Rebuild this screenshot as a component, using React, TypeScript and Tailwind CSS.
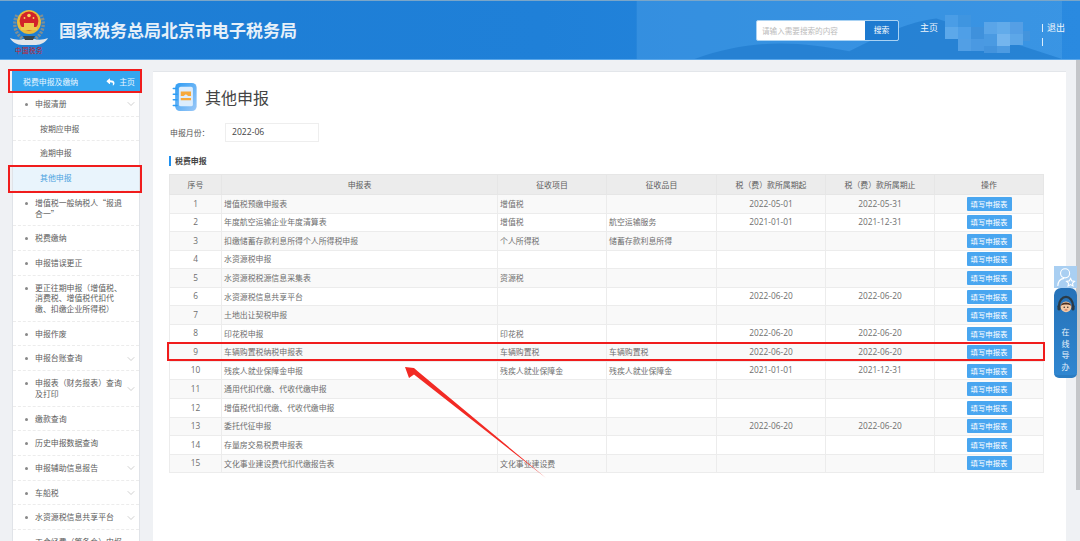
import { ChevronDown } from "lucide-react";
import { FaReply } from "react-icons/fa";

const font = "font-['Noto_Sans_CJK_SC','Microsoft_YaHei',sans-serif]";

type NavItem = { label: string; chevron?: boolean; sub?: boolean; active?: boolean };

const navItems: NavItem[] = [
  { label: "申报清册", chevron: true },
  { label: "按期应申报", sub: true },
  { label: "逾期申报", sub: true },
  { label: "其他申报", sub: true, active: true },
  { label: "增值税一般纳税人“报退合一”" },
  { label: "税费缴纳" },
  { label: "申报错误更正" },
  { label: "更正往期申报\uFF08增值税、消费税、增值税代扣代缴、扣缴企业所得税\uFF09" },
  { label: "申报作废" },
  { label: "申报台账查询", chevron: true },
  { label: "申报表\uFF08财务报表\uFF09查询及打印", chevron: true },
  { label: "缴款查询" },
  { label: "历史申报数据查询" },
  { label: "申报辅助信息报告", chevron: true },
  { label: "车船税", chevron: true },
  { label: "水资源税信息共享平台", chevron: true },
  { label: "工会经费\uFF08筹备金\uFF09申报" },
];

const rows = [
  ["1", "增值税预缴申报表", "增值税", "", "2022-05-01", "2022-05-31"],
  ["2", "年度航空运输企业年度清算表", "增值税", "航空运输服务", "2021-01-01", "2021-12-31"],
  ["3", "扣缴储蓄存款利息所得个人所得税申报", "个人所得税", "储蓄存款利息所得", "", ""],
  ["4", "水资源税申报", "", "", "", ""],
  ["5", "水资源税税源信息采集表", "资源税", "", "", ""],
  ["6", "水资源税信息共享平台", "", "", "2022-06-20", "2022-06-20"],
  ["7", "土地出让契税申报", "", "", "", ""],
  ["8", "印花税申报", "印花税", "", "2022-06-20", "2022-06-20"],
  ["9", "车辆购置税纳税申报表", "车辆购置税", "车辆购置税", "2022-06-20", "2022-06-20"],
  ["10", "残疾人就业保障金申报", "残疾人就业保障金", "残疾人就业保障金", "2021-01-01", "2021-12-31"],
  ["11", "通用代扣代缴、代收代缴申报", "", "", "", ""],
  ["12", "增值税代扣代缴、代收代缴申报", "", "", "", ""],
  ["13", "委托代征申报", "", "", "2022-06-20", "2022-06-20"],
  ["14", "存量房交易税费申报表", "", "", "", ""],
  ["15", "文化事业建设费代扣代缴报告表", "文化事业建设费", "", "", ""],
];

const headers = ["序号", "申报表", "征收项目", "征收品目", "税\uFF08费\uFF09款所属期起", "税\uFF08费\uFF09款所属期止", "操作"];

// 打码的用户名
const mosaic = [
  [945, 14, 13, 12, "#4a9de6"], [958, 14, 13, 12, "#3f95e0"], [984, 21, 13, 12, "#5aa5e8"], [997, 21, 13, 12, "#62abea"], [1010, 21, 13, 12, "#559fe5"],
  [945, 26, 13, 12, "#5ca8ea"], [958, 26, 13, 12, "#4f9fe7"], [971, 26, 13, 12, "#3f91dc"], [984, 33, 13, 12, "#4a9ae2"], [997, 33, 13, 12, "#74b5ee"],
  [1010, 33, 13, 11, "#5da7e8"], [958, 38, 13, 12, "#529fe5"], [971, 38, 13, 12, "#4a99e2"], [984, 45, 13, 7, "#4393dd"], [997, 45, 13, 7, "#4d9be2"], [1023, 30, 7, 10, "#4394dd"],
] as const;

function Emblem() {
  return (
    <svg viewBox="0 0 38 40" className="h-[40px] w-[38px] shrink-0">
      <path d="M0 31c5 2 10 2 14 1l5-1 5 1c4 1 9 1 14-1-2 4-7 7-12 7H12C7 38 2 35 0 31z" fill="#dfe5ea" />
      <path d="M7 8C3 15 4 26 13 32M31 8c4 7 3 18-6 24" fill="none" stroke="#7f8f94" strokeWidth="3.400" strokeDasharray="2.200 1.200" />
      <circle cx="19" cy="15" r="12" fill="#e9bb3c" />
      <circle cx="19" cy="14" r="9.400" fill="#d3232a" />
      <path d="M11 20h16v3H11zM14 16h10v4H14z" fill="#f0c94f" />
      <circle cx="19" cy="8.500" r="1.800" fill="#f5d65a" />
      <circle cx="14.500" cy="11" r=".9" fill="#f5d65a" />
      <circle cx="23.500" cy="11" r=".9" fill="#f5d65a" />
      <path d="M13 29h12l-2 4h-8z" fill="#39474f" />
    </svg>
  );
}

function Header() {
  return (
    <header className="relative flex h-[60px] items-center overflow-hidden border-t border-[#7ba6c8] border-b border-b-[#5aa7ea] bg-gradient-to-r from-[#1d7dd4] via-[#1f80d8] to-[#2a8ae0] pl-[10px] pr-[15px]">
      <svg viewBox="0 0 1080 60" className="absolute inset-0 h-full w-full">
        <path d="M640 0h440v60H640z" fill="#5aa8ea" opacity=".35" />
        <path d="M700 60c60-22 110-18 160-8 40-20 60-30 90-34l50 16 80 26z" fill="#1a74c9" opacity=".55" />
      </svg>
      <div className="relative flex flex-col items-center">
        <Emblem />
        <span className="mt-[-1px] text-[6.5px] leading-[8px] tracking-[0.5px] text-[#c8202a]">中国税务</span>
      </div>
      <h1 className="relative ml-[11px] text-[17px] font-bold tracking-normal text-[#e6f0f9]">国家税务总局北京市电子税务局</h1>
      <div className="relative ml-auto flex h-[21px] w-[143px] overflow-hidden rounded-[2px] border border-[#a9d2f3] bg-white">
        <span className="flex-1 pl-[5px] text-[7.6px] leading-[19px] text-[#bbb]">请输入需要搜索的内容</span>
        <span className="flex w-[33px] items-center justify-center bg-[#1d7ad0] text-[7.8px] text-white">搜索</span>
      </div>
      <span className="relative mb-[5px] ml-[21px] text-[9px] text-[#eef5fc]">主页</span>
      <svg viewBox="945 0 85 60" className="absolute top-0 left-[945px] h-[60px] w-[85px]">
        {mosaic.map(([x, y, w, h, c], i) => (
          <rect key={i} x={x} y={y} width={w} height={h} fill={c} />
        ))}
      </svg>
      <div className="relative mt-[12px] ml-[104px] flex h-[30px] flex-col items-start">
        <span className="flex items-center text-[9px] leading-[14px] text-[#eef5fc]">
          <span className="mr-[4px] h-[8px] w-px bg-[#dcedfb]" />
          退出
        </span>
        <span className="mt-[3px] h-[8px] w-px bg-[#dcedfb]" />
      </div>
    </header>
  );
}

function Sidebar() {
  return (
    <aside className="w-[128px] shrink-0">
      <div className="flex h-[21px] items-center bg-[#35a6ef] pr-[5px] pl-[11px] text-[7.9px] text-[#e9f6ff]">
        <span>税费申报及缴纳</span>
        <FaReply className="mr-[4px] ml-auto h-[8px] w-[9px] text-white" />
        <span>主页</span>
      </div>
      <ul className="border-x border-[#e0e3e8] bg-white text-[7.9px] leading-[10.7px] text-[#5c5c5c]">
        {navItems.map((item) => (
          <li
            key={item.label}
            className={`flex items-center border-b border-dashed border-[#ececec] pt-[7px] pb-[6px] ${item.active ? "bg-[#e9f4fc] text-[#4aa3e0]" : ""}`}
          >
            {item.sub ? (
              <span className="pl-[27px]">{item.label}</span>
            ) : (
              <>
                <span className="ml-[12px] mt-[4px] h-[3px] w-[3px] shrink-0 self-start rounded-full bg-[#888]" />
                <span className="ml-[7px] w-[88px]">{item.label}</span>
              </>
            )}
            {item.chevron && <ChevronDown strokeWidth={1} className="-my-[2px] ml-auto mr-[2px] h-[12px] w-[12px] text-[#a0a0a0]" />}
          </li>
        ))}
      </ul>
    </aside>
  );
}

function NotebookIcon() {
  return (
    <svg viewBox="0 0 26 30" className="h-[28px] w-[25px]">
      <defs>
        <linearGradient id="nb" x1="0" y1="0" x2="1" y2="1">
          <stop offset="0" stopColor="#2f9df4" />
          <stop offset="1" stopColor="#9cc8f7" />
        </linearGradient>
      </defs>
      <rect x="3" y="0" width="23" height="30" rx="5" fill="url(#nb)" />
      <rect x="7" y="4" width="15" height="21" rx="2" fill="#dcedfd" />
      <path d="M9 9h11v5h-3l-2.500-2-2.500 2H9zM9 16h11v2.500H9z" fill="#f6a93b" />
      <path d="M1 6h4M1 12h4M1 18h4M1 24h4" stroke="#2f9df4" strokeWidth="1.600" strokeLinecap="round" />
    </svg>
  );
}

function ReportTable() {
  return (
    <table className="w-[874px] table-fixed border-collapse text-[7.9px] text-[#6e6e6e]">
      <colgroup>
        <col className="w-[52px]" />
        <col className="w-[276px]" />
        <col className="w-[109px]" />
        <col className="w-[110px]" />
        <col className="w-[109px]" />
        <col className="w-[109px]" />
        <col className="w-[109px]" />
      </colgroup>
      <thead>
        <tr className="h-[20px] bg-[#ececec]">
          {headers.map((h) => (
            <th key={h} className="border border-[#e6e6e6] p-0 font-normal text-[#5c5c5c]">
              {h}
            </th>
          ))}
        </tr>
      </thead>
      <tbody>
        {rows.map((r, i) => (
          <tr key={r[0]} className={`h-[18.55px] ${i % 2 === 0 ? "bg-[#f9f9f9]" : "bg-white"}`}>
            <td className="border border-[#ececec] p-0 text-center font-['Open_Sans',sans-serif] text-[8.3px]">{r[0]}</td>
            <td className="border border-[#ececec] px-[2px] py-0">{r[1]}</td>
            <td className="border border-[#ececec] px-[2px] py-0">{r[2]}</td>
            <td className="border border-[#ececec] px-[2px] py-0">{r[3]}</td>
            <td className="border border-[#ececec] p-0 text-center font-['Open_Sans',sans-serif] text-[8.3px]">{r[4]}</td>
            <td className="border border-[#ececec] p-0 text-center font-['Open_Sans',sans-serif] text-[8.3px]">{r[5]}</td>
            <td className="border border-[#ececec] p-0 text-center">
              <button className="mx-auto block h-[14px] w-[45px] rounded-[1px] bg-[#49a6f0] text-[7.4px] leading-[14px] text-white">填写申报表</button>
            </td>
          </tr>
        ))}
      </tbody>
    </table>
  );
}

function Guide() {
  return (
    <div className="absolute top-[266px] left-[1054px] w-[23px]">
      <div className="flex h-[22px] items-center justify-center bg-[#a9cff2]">
        <svg viewBox="0 0 22 22" className="h-[20px] w-[20px]" fill="none" stroke="#fff" strokeWidth="1.200">
          <circle cx="10" cy="7" r="5" />
          <path d="M2 21c0-5 3-8 7-8.500" />
          <path d="M16 12.500l1.400 2.800 3 .4-2.200 2.100.5 3-2.700-1.400-2.700 1.400.5-3-2.200-2.100 3-.4z" />
        </svg>
      </div>
      <div className="flex h-[90px] flex-col items-center rounded-b-[5px] rounded-t-[7px] border-b-[3px] border-[#2a7cc2] bg-gradient-to-b from-[#2672b8] to-[#2f86d0] pt-[7px]">
        <svg viewBox="0 0 20 20" className="h-[20px] w-[18px]">
          <path d="M2 12C2 5 6 1 10 1s8 4 8 11" fill="none" stroke="#2b3a46" strokeWidth="2.400" />
          <rect x="0.500" y="10" width="3.500" height="6" rx="1.500" fill="#2b3a46" />
          <rect x="16" y="10" width="3.500" height="6" rx="1.500" fill="#2b3a46" />
          <circle cx="10" cy="12" r="6" fill="#f3c9a5" />
          <path d="M4 11c1-5 11-5 12 0-3-2-9-2-12 0z" fill="#4a2f22" />
          <circle cx="8" cy="12.500" r=".8" fill="#222" />
          <circle cx="12" cy="12.500" r=".8" fill="#222" />
          <path d="M8.500 15.500h3" stroke="#c0392b" strokeWidth=".8" />
        </svg>
        <span className="mt-[11px] w-[8px] text-center text-[8px] leading-[11.500px] text-[#e8f3fc]">在线导办</span>
      </div>
    </div>
  );
}

export default function App() {
  return (
    <div className={`relative h-[541px] w-[1080px] overflow-hidden bg-[#eff1f4] ${font}`}>
      <Header />
      <div className="flex h-[481px] items-start pt-[11px] pl-[12px]">
        <Sidebar />
        <main className="ml-[13px] h-[470px] w-[913px] shrink-0 border-t border-[#e3e6ea] bg-white pt-[10px] pl-[16px]">
          <div className="flex h-[30px] items-center pl-[3px]">
            <NotebookIcon />
            <h2 className="ml-[8px] text-[16px] text-[#444]">其他申报</h2>
          </div>
          <div className="mt-[11px] flex h-[19px] items-center text-[7.9px] text-[#555]">
            <span className="w-[56px] pl-[1px]">申报月份{"\uFF1A"}</span>
            <span className="flex h-[19px] w-[94px] items-center border border-[#eee] pl-[6px] font-['Open_Sans',sans-serif] text-[8.6px] text-[#444]">2022-06</span>
          </div>
          <div className="mt-[14px] flex h-[10px] items-center border-l-2 border-[#1e90f0] pl-[4px] text-[7.9px] font-bold text-[#444]">税费申报</div>
          <div className="mt-[8px]">
            <ReportTable />
          </div>
        </main>
        <div className="ml-[10px] mt-[-11px] h-[430px] w-[4px] shrink-0 self-start bg-[#c4c6c9]" />
      </div>
      <Guide />

      {/* 标注:红框和箭头 */}
      <div className="absolute top-[69px] left-[8px] h-[24px] w-[134px] border-2 border-[#f01c1c]" />
      <div className="absolute top-[165px] left-[8px] h-[28px] w-[134px] border-2 border-[#f01c1c]" />
      <div className="absolute top-[342px] left-[167px] h-[19px] w-[878px] border-2 border-[#f01c1c]" />
      <svg viewBox="0 0 1080 541" className="pointer-events-none absolute inset-0 h-[541px] w-[1080px]">
        <polygon points="405,367 414,368 418,371.500 546,478 414,374.500 409,378" fill="#f22a24" />
      </svg>
    </div>
  );
}
